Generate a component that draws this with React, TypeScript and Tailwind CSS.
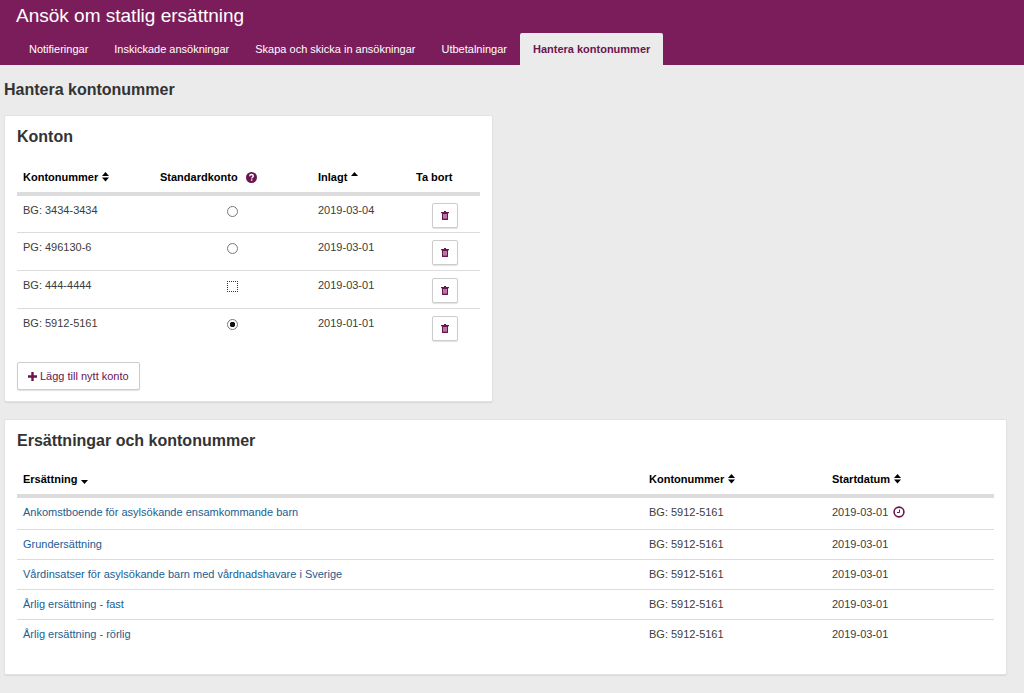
import React, { useState } from 'react';
import { clsx } from 'clsx';

const TABS = [
  'Notifieringar',
  'Inskickade ansökningar',
  'Skapa och skicka in ansökningar',
  'Utbetalningar',
  'Hantera kontonummer',
];

const ACCOUNTS = [
  { id: 'a1', number: 'BG: 3434-3434', added: '2019-03-04' },
  { id: 'a2', number: 'PG: 496130-6', added: '2019-03-01' },
  { id: 'a3', number: 'BG: 444-4444', added: '2019-03-01' },
  { id: 'a4', number: 'BG: 5912-5161', added: '2019-01-01' },
];

const COMPENSATIONS = [
  { name: 'Ankomstboende för asylsökande ensamkommande barn', account: 'BG: 5912-5161', start: '2019-03-01', pending: true },
  { name: 'Grundersättning', account: 'BG: 5912-5161', start: '2019-03-01' },
  { name: 'Vårdinsatser för asylsökande barn med vårdnadshavare i Sverige', account: 'BG: 5912-5161', start: '2019-03-01' },
  { name: 'Årlig ersättning - fast', account: 'BG: 5912-5161', start: '2019-03-01' },
  { name: 'Årlig ersättning - rörlig', account: 'BG: 5912-5161', start: '2019-03-01' },
];

type SortDirection = 'both' | 'up' | 'down';

const SortIcon: React.FC<{ direction: SortDirection }> = ({ direction }) => (
  <svg width="7" height="10" viewBox="0 0 7 10" fill="currentColor" aria-hidden="true">
    {direction === 'both' && <path d="M3.5 0 7 4H0zM0 5.5h7L3.5 9.5z" />}
    {direction === 'up' && <path d="M3.5 0 7 4H0z" />}
    {direction === 'down' && <path d="M0 6h7L3.5 10z" />}
  </svg>
);

const SortButton: React.FC<{ label: string; direction: SortDirection }> = ({ label, direction }) => (
  <button type="button" className="inline-flex items-center gap-1 font-bold">
    {label}
    <SortIcon direction={direction} />
  </button>
);

const QuestionIcon = () => (
  <svg width="11" height="11" viewBox="0 0 11 11" aria-hidden="true">
    <circle cx="5.5" cy="5.5" r="5.5" fill="#6b1550" />
    <path d="M3.7 4.2C3.8 3 4.5 2.5 5.5 2.5c1.1 0 1.8.6 1.8 1.5 0 1.2-1.6 1.2-1.6 2.5" fill="none" stroke="#fff" strokeWidth="1.4" />
    <path d="M4.9 7.3h1.5v1.4H4.9z" fill="#fff" />
  </svg>
);

const ClockIcon = () => (
  <svg width="12" height="12" viewBox="0 0 12 12" fill="none" stroke="#6b1550" role="img" aria-label="Kommande ändring">
    <circle cx="6" cy="6" r="4.9" strokeWidth="1.6" />
    <path d="M6.5 3.5v3h-2.5" strokeWidth="1" />
  </svg>
);

const TrashIcon = () => (
  <svg width="8" height="9" viewBox="0 0 8 9" aria-hidden="true">
    <path d="M3 0h2v1h3v1.2H0V1h3z" fill="#6b1550" />
    <path d="M1 2h6v6.4a.6.6 0 0 1-.6.6H1.6a.6.6 0 0 1-.6-.6z" fill="#6b1550" />
    <path d="M2 3h4v4.6H2z" fill="#c48ab2" />
    <path d="M2.8 3h.5v4.6h-.5zM4.7 3h.5v4.6h-.5z" fill="#8f4a7a" />
  </svg>
);

const PlusIcon = () => (
  <svg width="9" height="9" viewBox="0 0 9 9" fill="#6b1550" aria-hidden="true">
    <path d="M3.3 0h2.4v3.3H9v2.4H5.7V9H3.3V5.7H0V3.3h3.3z" />
  </svg>
);

const Card: React.FC<{ title: string; children: React.ReactNode }> = ({ title, children }) => (
  <section className="rounded-xs border border-[#e2e2e2] bg-white px-3 pt-[9px] pb-[11px] shadow-[0_1px_1px_rgba(0,0,0,0.08)]">
    <h2 className="text-base font-bold text-[#333]">{title}</h2>
    {children}
  </section>
);

const AccountTable = () => {
  const [standard, setStandard] = useState('a4');
  const [focused, setFocused] = useState('a3');

  return (
    <table className="mt-3.5 mb-4 w-full table-fixed text-left">
      <thead className="border-b-4 border-[#dcdcdc] text-black">
        <tr className="align-bottom">
          <th className="px-1.5 pt-1.5 pb-[7px]"><SortButton label="Kontonummer" direction="both" /></th>
          <th className="w-[158px] px-1.5 pt-1.5 pb-[7px]">
            <span className="flex items-center gap-2">
              Standardkonto
              <button type="button" aria-label="Hjälp om standardkonto"><QuestionIcon /></button>
            </span>
          </th>
          <th className="w-[98px] px-1.5 pt-1.5 pb-[7px]"><SortButton label="Inlagt" direction="up" /></th>
          <th className="w-[70px] px-1.5 pt-1.5 pb-[7px]">Ta bort</th>
        </tr>
      </thead>
      <tbody className="divide-y divide-[#dcdcdc]">
        {ACCOUNTS.map((account) => (
          <tr key={account.id} className="h-[38px] align-top">
            <td className="px-1.5 pt-1.5">{account.number}</td>
            <td className="pt-[10px] pr-2 pl-1.5">
              <input
                type="radio"
                name="standardkonto"
                aria-label={`Standardkonto ${account.number}`}
                checked={standard === account.id}
                onChange={() => setStandard(account.id)}
                onFocus={() => setFocused(account.id)}
                className={clsx(
                  'mx-auto block size-[11px] appearance-none border outline-none',
                  focused === account.id ? 'border-dotted border-[#333]' : 'rounded-full border-[#777]',
                  standard === account.id && 'bg-[radial-gradient(circle,#111_0_2.5px,transparent_3px)]',
                )}
              />
            </td>
            <td className="px-1.5 pt-1.5">{account.added}</td>
            <td className="pt-[7px]">
              <button
                type="button"
                aria-label={`Ta bort ${account.number}`}
                className="mx-auto flex h-[25px] w-[26px] items-center justify-center rounded-xs border border-[#ccc] bg-white shadow-[0_1px_1px_rgba(0,0,0,0.12)]"
              >
                <TrashIcon />
              </button>
            </td>
          </tr>
        ))}
      </tbody>
    </table>
  );
};

const CompensationTable = () => (
  <table className="mt-3.5 mb-3.5 w-full table-fixed text-left">
    <thead className="border-b-4 border-[#dcdcdc] text-black">
      <tr className="align-bottom">
        <th className="px-1.5 pt-1 pb-[7px]"><SortButton label="Ersättning" direction="down" /></th>
        <th className="w-[183px] px-1.5 pt-1 pb-[7px]"><SortButton label="Kontonummer" direction="both" /></th>
        <th className="w-[168px] px-1.5 pt-1 pb-[7px]"><SortButton label="Startdatum" direction="both" /></th>
      </tr>
    </thead>
    <tbody className="divide-y divide-[#dcdcdc]">
      {COMPENSATIONS.map((row) => (
        <tr key={row.name} className={clsx('align-top', row.pending ? 'h-[33px]' : 'h-[30px]')}>
          <td className="px-1.5 pt-1.5"><a href="#" className="text-[#205d93]">{row.name}</a></td>
          <td className="px-1.5 pt-1.5">{row.account}</td>
          <td className="px-1.5 pt-1.5">
            <span className="flex items-center gap-[5px]">
              {row.start}
              {row.pending && <ClockIcon />}
            </span>
          </td>
        </tr>
      ))}
    </tbody>
  </table>
);

export default function App() {
  return (
    <div className="min-h-screen bg-[#ebebeb] font-['Liberation_Sans',Arial,sans-serif] text-[11px] leading-4 text-[#3c3c3c]">
      <header className="bg-[#7c1d5b] px-4 text-white">
        <h1 className="pt-1 pb-[5px] text-[19px] leading-6">Ansök om statlig ersättning</h1>
        <nav className="flex">
          {TABS.map((tab) => (
            <a
              key={tab}
              href="#"
              className={clsx(
                'px-[13px] py-2 whitespace-nowrap',
                tab === 'Hantera kontonummer' && 'rounded-t-xs bg-[#ebebeb] font-bold text-[#6b1550]',
              )}
            >
              {tab}
            </a>
          ))}
        </nav>
      </header>

      <main className="pt-[13px] pr-[17px] pb-4 pl-1">
        <p role="heading" aria-level={1} className="text-base font-bold text-[#333]">Hantera kontonummer</p>
        <div className="mt-[13px] grid grid-cols-2 gap-[25px]">
          <Card title="Konton">
            <AccountTable />
            <button
              type="button"
              className="flex h-7 items-center gap-[3px] rounded-xs border border-[#ccc] bg-white px-[10px] text-[#6b1550] shadow-[0_1px_1px_rgba(0,0,0,0.12)]"
            >
              <PlusIcon />
              Lägg till nytt konto
            </button>
          </Card>
        </div>
        <div className="mt-[17px]">
          <Card title="Ersättningar och kontonummer">
            <CompensationTable />
          </Card>
        </div>
      </main>
    </div>
  );
}
